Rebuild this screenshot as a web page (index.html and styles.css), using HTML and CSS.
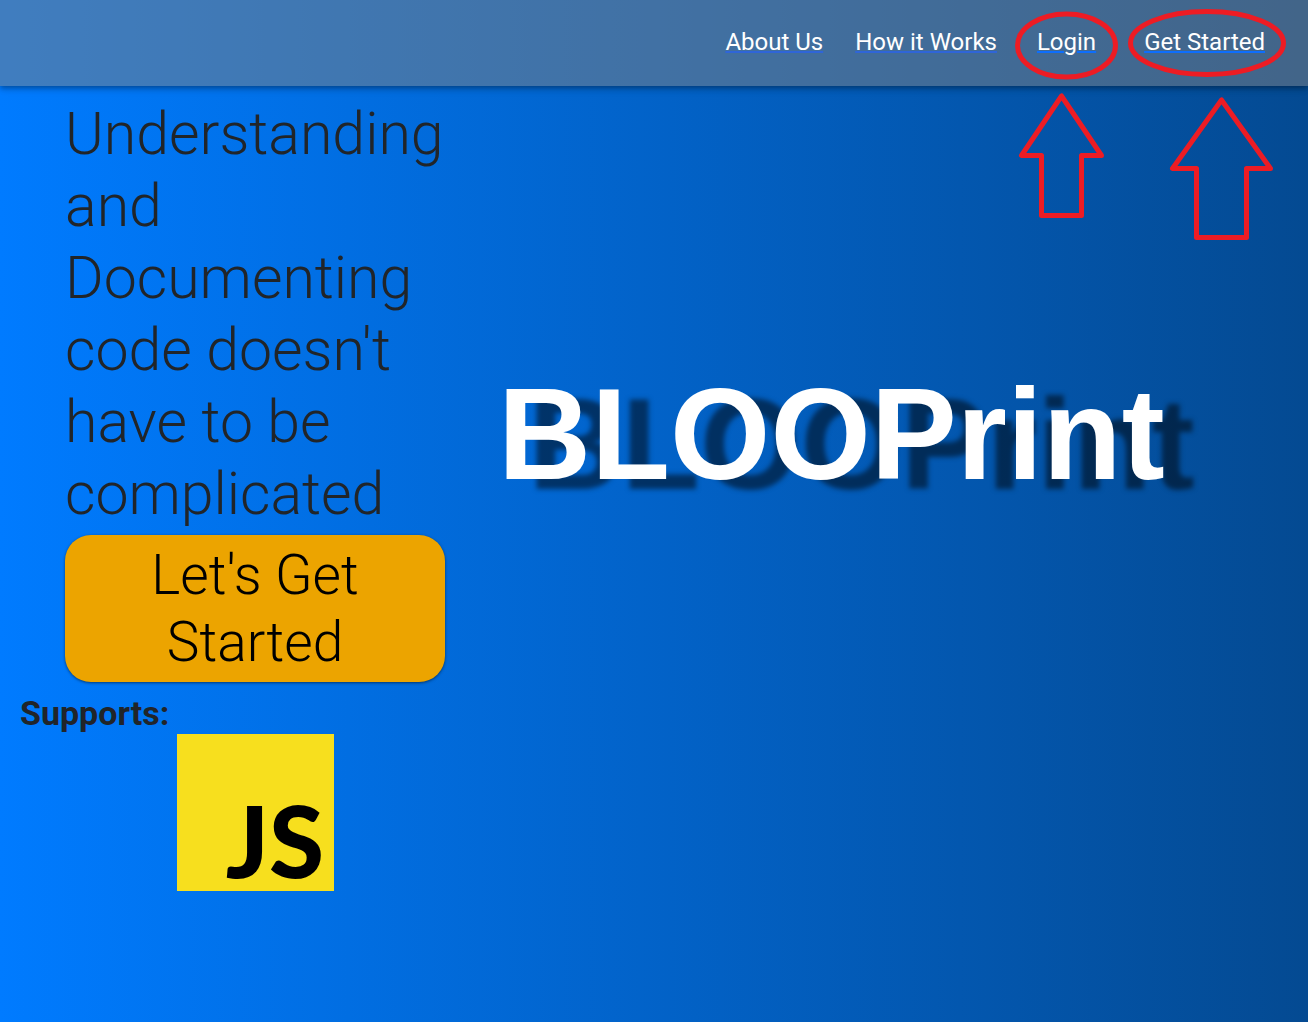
FILE: index.html
```html
<!DOCTYPE html>
<html lang="en">
<head>
<meta charset="utf-8">
<meta name="viewport" content="width=device-width, initial-scale=1">
<title>BLOOPrint</title>
<link rel="stylesheet" href="styles.css">
</head>
<body>
<header class="topbar">
  <nav class="nav">
    <a class="nav-link" href="#about">About Us</a>
    <a class="nav-link" href="#how">How it Works</a>
    <a class="nav-link nav-action" href="#login">Login</a>
    <a class="nav-link nav-action" href="#signup">Get Started</a>
  </nav>
  <svg class="callouts" width="308" height="250" viewBox="0 0 308 250" aria-hidden="true">
    <ellipse cx="66.500" cy="45.500" rx="49" ry="31.500"/>
    <ellipse cx="207" cy="43" rx="76.500" ry="31.500"/>
    <path d="M61.500 96L21.500 155.500H41.500V215.500H81.500V155.500H101.500Z"/>
    <path d="M221.500 100L172.500 168.500H196.500V237.500H246.500V168.500H270.500Z"/>
  </svg>
</header>
<main class="hero">
  <section class="intro">
    <div class="pitch">
      <h2 class="headline">Understanding and Documenting code doesn't have to be complicated</h2>
      <button class="cta" type="button">Let's Get Started</button>
    </div>
    <h4 class="supports">Supports:</h4>
    <svg class="js-logo" viewBox="0 0 157 157" role="img" aria-label="JavaScript">
      <rect width="157" height="157" fill="#f7df1e"/>
      <text class="js-text" x="147" y="144" text-anchor="end">JS</text>
    </svg>
  </section>
  <h1 class="brand">BLOOPrint</h1>
</main>
</body>
</html>
```
FILE: styles.css
```css
* { box-sizing: border-box; }

body {
  margin: 0;
  min-height: 100vh;
  font-family: Roboto, "Liberation Sans", sans-serif;
  color: #212529;
  background: linear-gradient(to right, #007bff, #044a92);
}

.topbar {
  position: relative;
  display: flex;
  justify-content: flex-end;
  padding: 26px 19px 28px;
  background: rgba(128, 128, 128, 0.5);
  box-shadow: 0 2px 4px -1px rgba(0, 0, 0, 0.2), 0 4px 5px rgba(0, 0, 0, 0.14), 0 1px 10px rgba(0, 0, 0, 0.12);
}

.nav { display: flex; }

.nav-link {
  padding: 0 16px;
  font-size: 24px;
  line-height: 32px;
  color: #fff;
  text-decoration: underline 2px #2f65d8;
}

.nav-action {
  padding: 0 24px;
  text-decoration-color: #0d6efd;
}

.callouts {
  position: absolute;
  top: 0;
  right: 0;
  fill: none;
  stroke: #ed1c24;
  stroke-width: 5;
  stroke-linejoin: round;
  pointer-events: none;
}

.hero {
  display: grid;
  grid-template-columns: 39% 1fr;
  padding-top: 12px;
}

.intro {
  display: flex;
  flex-direction: column;
}

.pitch { padding: 0 65px; }

.headline {
  margin: 0;
  font-size: 59px;
  font-weight: 300;
  line-height: 72px;
}

.cta {
  display: block;
  width: 100%;
  margin-top: 5px;
  padding: 7px 16px 6px;
  border: 0;
  border-radius: 26px;
  font-family: inherit;
  font-size: 55px;
  font-weight: 300;
  line-height: 67px;
  color: #000;
  background: #eca400;
  box-shadow: 0 1px 3px rgba(0, 0, 0, 0.5);
}

.supports {
  margin: 10px 0 0 20px;
  font-size: 34px;
  font-weight: 700;
  line-height: 42px;
}

.js-logo {
  width: 157px;
  align-self: center;
  overflow: visible;
}

.js-text {
  font-family: Lato, sans-serif;
  font-size: 100px;
  font-weight: 900;
}

.brand {
  margin: 259px 144px 0 -12px;
  font-family: "Liberation Sans", Arial, sans-serif;
  font-size: 129px;
  font-weight: 700;
  line-height: 154px;
  text-align: center;
  color: #fff;
  text-shadow: 30px 10px 5px rgba(0, 0, 0, 0.5);
}
```
